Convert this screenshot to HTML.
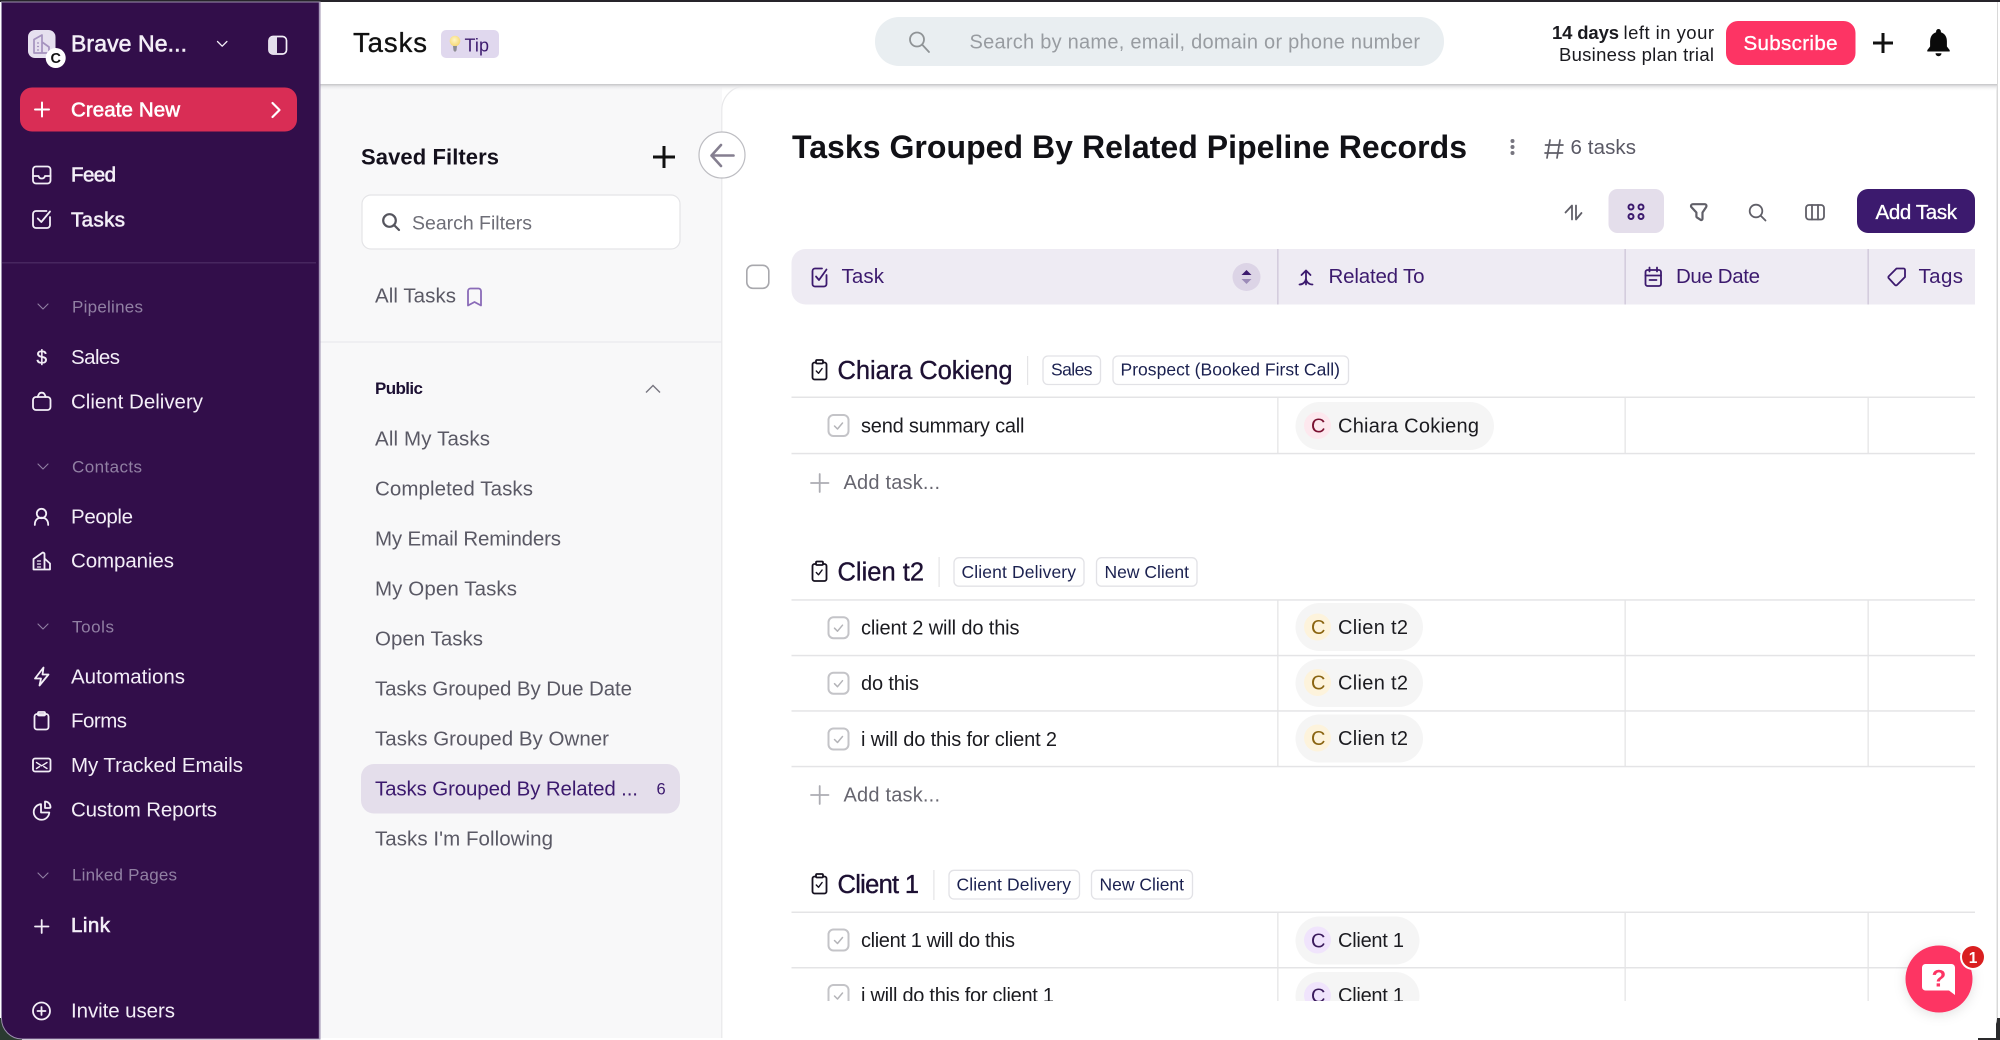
<!DOCTYPE html>
<html lang="en">
<head>
<meta charset="utf-8">
<title>Tasks</title>
<style>
html,body{margin:0;padding:0;width:2000px;height:1040px;overflow:hidden;background:#fff}
svg{display:block;filter:blur(.35px)}
text{font-family:"Liberation Sans",sans-serif;fill:currentColor;stroke:currentColor;stroke-width:0}
.m{stroke-width:.35}
.s{stroke-width:.6}
.i{fill:none;stroke:currentColor;stroke-width:1.8;stroke-linecap:round;stroke-linejoin:round}
</style>
</head>
<body>
<svg width="2000" height="1040" viewBox="0 0 2000 1040" xmlns="http://www.w3.org/2000/svg">
<defs>
<linearGradient id="sh" x1="0" y1="0" x2="0" y2="1"><stop offset="0" stop-color="#c4c4c6"/><stop offset=".35" stop-color="#e6e6e8"/><stop offset="1" stop-color="#f8f8f9" stop-opacity="0"/></linearGradient>
<radialGradient id="bulb" cx=".45" cy=".4" r=".6"><stop offset="0" stop-color="#fff6c8"/><stop offset="1" stop-color="#f6d873"/></radialGradient>
<clipPath id="rows"><rect x="780" y="910" width="1200" height="91"/></clipPath>
<filter id="hs" x="-30%" y="-30%" width="160%" height="160%"><feDropShadow dx="0" dy="2" stdDeviation="6" flood-color="#000" flood-opacity=".12"/></filter>
<g id="cb">
<rect x="828.500" y="-10.500" width="20" height="21" rx="5" fill="#fff" stroke="#c4c4c8" stroke-width="2"/>
<path d="M834.500 .5l3 3 5-6" fill="none" stroke="#b4b4b8" stroke-width="1.500" stroke-linecap="round" stroke-linejoin="round"/>
</g>
<g id="clip" fill="none" stroke="#15101f" stroke-width="1.800" stroke-linejoin="round" stroke-linecap="round">
<rect x="812.500" y="-8" width="14" height="17" rx="2"/>
<rect x="816" y="-10.500" width="7" height="3.500" rx="1" fill="#fff"/>
<path d="M816.300 .5l2.200 2.300 3.600-4.800" stroke-width="1.400"/>
</g>
</defs>

<!-- window base -->
<rect width="2000" height="1040" fill="#fff"/>
<rect x="0" y="0" width="2000" height="2" fill="#26242a"/>
<!-- corners -->
<rect x="0" y="1018" width="22" height="22" fill="#2a3a30"/>
<rect x="1978" y="1018" width="22" height="22" fill="#2a2a2c"/>

<!-- main surface -->
<path d="M320 2H1997V1018a20 20 0 0 1-20 20H320z" fill="#fff"/>
<rect x="1996.500" y="2" width="1.500" height="1016" fill="#d8d8d8"/>
<!-- panel -->
<rect x="320" y="84" width="402" height="954" fill="#f8f8f9"/>
<rect x="320" y="341" width="402" height="2" fill="#efeff2"/>
<path d="M722 1038V110a24 24 0 0 1 24-24H1996V1038z" fill="#fff"/>
<path d="M721.800 1038V110a24 24 0 0 1 24-24" fill="none" stroke="#e8e8ea" stroke-width="1.200"/>
<rect x="320" y="84" width="1677" height="7" fill="url(#sh)"/>
<rect x="320" y="2" width="1677" height="82" fill="#fff"/>

<!-- sidebar -->
<path d="M1.500 2H320V1039H22a20.500 20.500 0 0 1-20.500-20.500z" fill="#320e4a" stroke="#9c8fae" stroke-width="1"/>
<rect x="318.800" y="2" width="1.200" height="1037" fill="#a99cbc"/>
<rect x="2" y="262" width="314" height="1.500" fill="#47265f"/>

<rect x="28" y="30" width="27.500" height="28" rx="7" fill="#e6e0ef"/>
<g fill="none" stroke="#a593bf" stroke-width="1.700" stroke-linejoin="round"><path d="M34 53V39.500l8-4.500V53zM42 42l7 5v6h-7"/><path d="M37 43h2M37 46.500h2M37 50h2" stroke-width="1.300"/></g>
<circle cx="55.700" cy="58" r="10" fill="#fff"/>
<text x="50.500" y="63" font-size="14.500" font-weight="bold" style="color:#111" textLength="10.500">C</text>
<g style="color:#f3eef7">
<text class="s" x="71" y="51.500" font-size="23" textLength="116">Brave Ne...</text>
<path class="i" style="stroke-width:1.300" d="M217.500 41.500l4.700 4.700 4.700-4.700"/>
<rect x="269" y="36.500" width="17.500" height="17.500" rx="4" fill="none" stroke="#f3eef7" stroke-width="1.700"/>
<path d="M277 36.500h-4a4 4 0 0 0-4 4v9.500a4 4 0 0 0 4 4h4z" fill="#e4deec"/>
</g>

<rect x="20" y="87.500" width="277" height="44" rx="12" fill="#d92d55"/>
<g style="color:#fff">
<path class="i" style="stroke-width:2" d="M35 109.500h14M42 102.500v14"/>
<text class="s" x="71" y="116.500" font-size="20.500" textLength="109">Create New</text>
<path class="i" style="stroke-width:2.200" d="M272.500 103l7 7-7 7"/>
</g>

<g style="color:#f3eef7;font-size:20.500px">
<g class="i">
<rect x="33" y="166.500" width="17.500" height="17" rx="3"/>
<path d="M33 176h5.500c.5 2 1.500 2.500 3.200 2.500s2.800-.5 3.300-2.500h5.500"/>
<path d="M50 217v8a3 3 0 0 1-3 3H36a3 3 0 0 1-3-3V214a3 3 0 0 1 3-3h10.500"/>
<path d="M37.800 218.500l3.500 3.500 8.700-10.500"/>
<rect x="33" y="397" width="17.500" height="13" rx="3"/>
<path d="M37.500 397l1.500-3a3 3 0 0 1 2.700-1.300 3 3 0 0 1 2.700 1.300l1.500 3"/>
<circle cx="41.500" cy="513.500" r="4.700"/>
<path d="M34.800 525c0-5.200 2.800-7.300 6.700-7.300s6.700 2.100 6.700 7.300"/>
<path d="M33.500 569.500V559l8.500-6a1.500 1.500 0 0 1 2.500 1.200V569.500M44.500 558.500L50 563.500V569.500H33.500"/>
<path d="M37.500 561h3M37.500 564h3M37.500 567h3" style="stroke-width:1.300"/>
<path d="M43.500 667.500L35 678.500h6l-1.500 7 9-11h-6z"/>
<rect x="34.500" y="714" width="14" height="15.500" rx="2.500"/>
<rect x="38" y="712" width="7" height="3.500" rx="1"/>
<rect x="33" y="758.500" width="17.500" height="13" rx="2"/>
<path d="M36.500 762.500l5.200 3.300 5.300-3.300M36.500 768.500l3.200-2M47 768.500l-3.200-2" style="stroke-width:1.400"/>
<path d="M41 804.200a7.800 7.800 0 1 0 8.300 8.300h-8.300z"/>
<path d="M45 801.500a5.500 5.500 0 0 1 5.500 5.500 1 1 0 0 1-1 1H45z"/>
<path d="M35 926.500h13.500M41.700 920v13"/>
<circle cx="41.500" cy="1011" r="8.500"/>
<path d="M37.500 1011h8M41.500 1007v8"/>
</g>
<text class="s" x="71" y="181.500" textLength="45">Feed</text>
<text class="s" x="71" y="226.300" textLength="54">Tasks</text>
<text class="m" x="36.500" y="364" style="font-size:19px" textLength="11">$</text>
<text x="71" y="364" textLength="49">Sales</text>
<text x="71" y="408.300" textLength="132">Client Delivery</text>
<text x="71" y="523.300" textLength="62">People</text>
<text x="71" y="567.700" textLength="103">Companies</text>
<text x="71" y="683.300" textLength="114">Automations</text>
<text x="71" y="727.700" textLength="56">Forms</text>
<text x="71" y="772" textLength="172">My Tracked Emails</text>
<text x="71" y="816.700" textLength="146">Custom Reports</text>
<text class="s" x="71" y="932" textLength="39">Link</text>
<text x="71" y="1017.700" textLength="104">Invite users</text>
</g>
<g style="color:#9180a3;font-size:17px">
<g class="i" style="stroke-width:1.100">
<path d="M38 304l5 5 5-5M38 464l5 5 5-5M38 624l5 5 5-5M38 873l5 5 5-5"/>
</g>
<text x="72" y="312.700" textLength="71">Pipelines</text>
<text x="72" y="472.300" textLength="70">Contacts</text>
<text x="72" y="632.300" textLength="42">Tools</text>
<text x="72" y="880.300" textLength="105">Linked Pages</text>
</g>

<!-- header -->
<text class="m" x="353" y="52" font-size="27.500" style="color:#111" textLength="74">Tasks</text>
<rect x="441" y="30" width="58" height="28" rx="5" fill="#e0d8ee"/>
<circle cx="455" cy="41" r="5.300" fill="url(#bulb)"/>
<path d="M453 46h4l-.5 4.500-1.500 1.500-1.500-1.500z" fill="#8d8d92"/>
<text x="464.500" y="51.500" font-size="18" style="color:#3c1a6e" textLength="24.500">Tip</text>

<rect x="875" y="17" width="569" height="49" rx="24" fill="#e9eef1"/>
<g class="i" style="color:#8f9396"><circle cx="917" cy="39.500" r="7"/><path d="M922.500 45l6.500 7"/></g>
<text x="969.500" y="48.500" font-size="20" style="color:#989ca1" textLength="450.500">Search by name, email, domain or phone number</text>

<g font-size="18.500" style="color:#1a1a1f">
<text x="1552" y="39" font-weight="bold" textLength="67">14 days</text>
<text x="1623.500" y="39" textLength="90.500">left in your</text>
<text x="1559" y="61" textLength="155">Business plan trial</text>
</g>
<rect x="1726" y="21" width="129.500" height="44" rx="12" fill="#fd3464"/>
<text class="m" x="1743.500" y="50" font-size="20.500" style="color:#fff" textLength="94">Subscribe</text>
<path d="M1873 43h20M1883 33v20" stroke="#111" stroke-width="3" fill="none"/>
<path d="M1938.500 29a2.400 2.400 0 0 1 2.400 2.400v.9c4 1.300 6 4.700 6 9.200v5l2.800 3.600v1.400H1927.300v-1.400l2.800-3.600v-5c0-4.500 2-7.900 6-9.200v-.9a2.400 2.400 0 0 1 2.400-2.400z" fill="#0a0a0a"/>
<path d="M1935.500 53.200h6a3 3 0 0 1-6 0z" fill="#0a0a0a"/>

<!-- saved filters panel -->
<text font-weight="bold" x="361" y="164.300" font-size="22" style="color:#14101c" textLength="138">Saved Filters</text>
<path d="M653 157h22M664 146v22" stroke="#111" stroke-width="3" fill="none"/>
<circle cx="722" cy="155" r="23" fill="#fff" stroke="#bdbdc2" stroke-width="1.200"/>
<g class="i" style="color:#857f90;stroke-width:2.600"><path d="M711.500 155.500h22M721 145l-9.500 10.500 9.500 10.500"/></g>
<rect x="362" y="195" width="318" height="54" rx="9" fill="#fff" stroke="#e4e4e7" stroke-width="1.200"/>
<g class="i" style="color:#55555e;stroke-width:2.200"><circle cx="389.500" cy="220.500" r="6.300"/><path d="M394.500 225.500l4.500 4.500"/></g>
<text x="412" y="229.300" font-size="19.500" style="color:#6e6e77" textLength="120">Search Filters</text>
<text x="375" y="302.700" font-size="20.500" style="color:#5a5965" textLength="81">All Tasks</text>
<path d="M468 291a2.500 2.500 0 0 1 2.500-2.500h8a2.500 2.500 0 0 1 2.500 2.500v14.500l-6.500-3.500-6.500 3.500z" fill="none" stroke="#8a6bb8" stroke-width="1.800" stroke-linejoin="round"/>

<text font-weight="bold" x="375" y="394" font-size="17" style="color:#1c1033" textLength="48">Public</text>
<path d="M646 392.500l7-7 7 7" fill="none" stroke="#77757f" stroke-width="1.400"/>
<g font-size="20.500" style="color:#5a5965">
<text x="375" y="445.700" textLength="115">All My Tasks</text>
<text x="375" y="495.700" textLength="158">Completed Tasks</text>
<text x="375" y="545.700" textLength="186">My Email Reminders</text>
<text x="375" y="595.700" textLength="142">My Open Tasks</text>
<text x="375" y="645.700" textLength="108">Open Tasks</text>
<text x="375" y="695.700" textLength="257">Tasks Grouped By Due Date</text>
<text x="375" y="745.700" textLength="234">Tasks Grouped By Owner</text>
<text x="375" y="845.500" textLength="178">Tasks I'm Following</text>
</g>
<rect x="361" y="764" width="319" height="49.500" rx="13" fill="#e4deeb"/>
<text x="375" y="795.700" font-size="20.500" style="color:#3c1a6e" textLength="263">Tasks Grouped By Related ...</text>
<text x="656.500" y="794.700" font-size="16.500" style="color:#3c1a6e" textLength="9.500">6</text>

<!-- title -->
<text font-weight="bold" x="792" y="158" font-size="32" style="color:#111116" textLength="675">Tasks Grouped By Related Pipeline Records</text>
<g fill="#77757f"><circle cx="1512.500" cy="141" r="2"/><circle cx="1512.500" cy="147" r="2"/><circle cx="1512.500" cy="153" r="2"/></g>
<g class="i" style="color:#5f5e68;stroke-width:1.700"><path d="M1550 140l-3 18M1560 140l-3 18M1545.500 145h17.500M1545 153h17.500"/></g>
<text x="1570.500" y="154" font-size="20.500" style="color:#5a5965" textLength="65.500">6 tasks</text>

<!-- toolbar -->
<g class="i" style="color:#605f68;stroke-width:1.800">
<path d="M1572 219.500V205.500l-6.500 7M1576 205.500v14l5.500-6.500"/>
<path style="stroke-width:2.200" d="M1691 206a1.800 1.800 0 0 1 1.800-1.800h11.900a1.800 1.800 0 0 1 1.500 2.800l-3.700 5.500v6.300a1.200 1.200 0 0 1-1.900 1l-3.700-2.400a1 1 0 0 1-.5-.9V212.500l-5.100-5.500a1.800 1.800 0 0 1-.3-1z"/>
<circle cx="1756" cy="211" r="6.300"/><path d="M1761 216l4.500 4.500"/>
<rect x="1806" y="205" width="18" height="14.500" rx="3"/><path d="M1812 205v14.500M1818 205v14.500"/>
</g>
<rect x="1608.500" y="189" width="55.500" height="44" rx="9" fill="#e4deeb"/>
<g fill="none" stroke="#3c1a6e" stroke-width="2"><circle cx="1631" cy="207" r="2.500"/><circle cx="1641" cy="207" r="2.500"/><circle cx="1631" cy="216.500" r="2.500"/><circle cx="1641" cy="216.500" r="2.500"/></g>
<rect x="1857" y="189" width="118" height="44" rx="11" fill="#3c1a6e"/>
<text class="m" x="1875.500" y="219" font-size="20.500" style="color:#fff" textLength="81.500">Add Task</text>

<!-- table header -->
<rect x="746.800" y="265.300" width="22" height="23" rx="6" fill="#fff" stroke="#a8a8ad" stroke-width="1.600"/>
<path d="M805.500 249H1975v55.500H805.500a14 14 0 0 1-14-14V263a14 14 0 0 1 14-14z" fill="#eeebf3"/>
<rect x="1277.200" y="249" width="1.300" height="55.500" fill="#cdc6d8"/>
<rect x="1624.500" y="249" width="1.300" height="55.500" fill="#cdc6d8"/>
<rect x="1867.500" y="249" width="1.300" height="55.500" fill="#cdc6d8"/>
<g class="i" style="color:#3c1a6e">
<path d="M827 275v9a2.500 2.500 0 0 1-2.500 2.500h-9a2.500 2.500 0 0 1-2.500-2.500v-13a2.500 2.500 0 0 1 2.500-2.500h7" transform="translate(-.5 0)"/>
<path d="M816 276.500l3 3.500 7.500-10.500"/>
<path d="M1306 284.500v-13M1301.500 275l4.500-4.500 4.500 4.500M1299.500 284.500a6.500 6.500 0 0 0 6.500-6 6.500 6 0 0 0 6.500 6"/>
<rect x="1645.500" y="270" width="15.500" height="16" rx="2"/>
<path d="M1645.500 275.500h15.500M1649.500 267.500v4M1657 267.500v4M1649.500 280h7" />
<path d="M1889 276l7.500-7.500h7a1.500 1.500 0 0 1 1.500 1.500v7l-8 8a1.500 1.500 0 0 1-2 0l-6-6.500a1.500 1.500 0 0 1 0-2.500z"/>
</g>
<circle cx="1246.500" cy="277" r="14" fill="#dcd4e6"/>
<path d="M1241.500 275l5-5 5 5z" fill="#3c1a6e"/>
<path d="M1241.500 279l5 5 5-5z" fill="#9c8bb8"/>
<g font-size="20.500" style="color:#3c1a6e">
<text x="841.500" y="283" textLength="42.500">Task</text>
<text x="1328.500" y="283" textLength="96">Related To</text>
<text x="1676" y="283" textLength="84">Due Date</text>
<text x="1918.500" y="283" textLength="44.500">Tags</text>
</g>

<!-- table lines -->
<g fill="#e4e4e6">
<rect x="791.500" y="396.500" width="1183.500" height="1.500"/>
<rect x="791.500" y="452.800" width="1183.500" height="1.500"/>
<rect x="791.500" y="599.200" width="1183.500" height="1.500"/>
<rect x="791.500" y="654.800" width="1183.500" height="1.500"/>
<rect x="791.500" y="710.200" width="1183.500" height="1.500"/>
<rect x="791.500" y="765.800" width="1183.500" height="1.500"/>
<rect x="791.500" y="911.500" width="1183.500" height="1.500"/>
<rect x="791.500" y="967" width="1183.500" height="1.500"/>
<rect x="1277.200" y="397" width="1.300" height="56"/>
<rect x="1624.500" y="397" width="1.300" height="56"/>
<rect x="1867.500" y="397" width="1.300" height="56"/>
<rect x="1277.200" y="600" width="1.300" height="167"/>
<rect x="1624.500" y="600" width="1.300" height="167"/>
<rect x="1867.500" y="600" width="1.300" height="167"/>
<rect x="1277.200" y="912" width="1.300" height="89"/>
<rect x="1624.500" y="912" width="1.300" height="89"/>
<rect x="1867.500" y="912" width="1.300" height="89"/>
<rect x="1027" y="356" width="1.200" height="29"/>
<rect x="938.500" y="557" width="1.200" height="30"/>
<rect x="933.300" y="870" width="1.200" height="30"/>
</g>

<!-- group 1 -->
<use href="#clip" y="370.500"/>
<text class="m" x="837.500" y="379" font-size="25.500" style="color:#1d1033" textLength="175">Chiara Cokieng</text>
<g fill="#fff" stroke="#e2e2e6" stroke-width="1.300">
<rect x="1043" y="356" width="57.500" height="28.500" rx="5"/>
<rect x="1113" y="356" width="235.500" height="28.500" rx="5"/>
<rect x="954" y="557.700" width="130" height="28.500" rx="5"/>
<rect x="1096.500" y="557.700" width="100.500" height="28.500" rx="5"/>
<rect x="949" y="870.300" width="130.500" height="28.700" rx="5"/>
<rect x="1091.500" y="870.300" width="101" height="28.700" rx="5"/>
</g>
<g font-size="17.500" style="color:#1b2150">
<text x="1051" y="375.700" textLength="41.500">Sales</text>
<text x="1120.500" y="375.700" textLength="219.500">Prospect (Booked First Call)</text>
<text x="961.500" y="578" textLength="114.500">Client Delivery</text>
<text x="1104.500" y="578" textLength="84.500">New Client</text>
<text x="956.500" y="890.500" textLength="114.500">Client Delivery</text>
<text x="1099.500" y="890.500" textLength="84.500">New Client</text>
</g>

<use href="#cb" y="425.500"/>
<g font-size="20" style="color:#1b1b20">
<text x="861" y="432.700" textLength="163.500">send summary call</text>
<text x="861" y="634.700" textLength="158.500">client 2 will do this</text>
<text x="861" y="690" textLength="58">do this</text>
<text x="861" y="746" textLength="196">i will do this for client 2</text>
<text x="861" y="947" textLength="154">client 1 will do this</text>
</g>
<use href="#cb" y="627.700"/><use href="#cb" y="683.200"/><use href="#cb" y="739"/><use href="#cb" y="940"/>

<!-- add task -->
<g class="i" style="color:#acacb2;stroke-width:1.800"><path d="M811 483h17.500M819.700 474v18M811 795h17.500M819.700 786v18"/></g>
<g font-size="20" style="color:#66656f">
<text x="843.500" y="489" textLength="96.500">Add task...</text>
<text x="843.500" y="801.700" textLength="96.500">Add task...</text>
</g>

<!-- group 2 / 3 headings -->
<use href="#clip" y="572"/>
<text class="m" x="837.500" y="580.500" font-size="25.500" style="color:#1d1033" textLength="86.500">Clien t2</text>
<use href="#clip" y="884.500"/>
<text class="m" x="837.500" y="893" font-size="25.500" style="color:#1d1033" textLength="81.500">Client 1</text>

<!-- pills -->
<g fill="#f5f5f5">
<rect x="1295.500" y="402" width="198.500" height="48" rx="24"/>
<rect x="1295.500" y="603" width="127.500" height="48" rx="24"/>
<rect x="1295.500" y="659" width="127.500" height="48" rx="24"/>
<rect x="1295.500" y="714.500" width="127.500" height="48" rx="24"/>
<rect x="1295.500" y="916.500" width="124" height="48" rx="24"/>
</g>
<circle cx="1317.500" cy="425.500" r="13.500" fill="#fde8ee"/>
<circle cx="1317.500" cy="627" r="13.500" fill="#fdf3dc"/>
<circle cx="1317.500" cy="682.500" r="13.500" fill="#fdf3dc"/>
<circle cx="1317.500" cy="738" r="13.500" fill="#fdf3dc"/>
<circle cx="1317.500" cy="940" r="13.500" fill="#f0e4fc"/>
<g font-size="20">
<text x="1311" y="432.500" style="color:#7a1030" textLength="14">C</text>
<text x="1311" y="634" style="color:#8a6410" textLength="14">C</text>
<text x="1311" y="689.500" style="color:#8a6410" textLength="14">C</text>
<text x="1311" y="745" style="color:#8a6410" textLength="14">C</text>
<text x="1311" y="947.500" style="color:#3a1a5c" textLength="14">C</text>
</g>
<g font-size="20" style="color:#1b1b20">
<text x="1338" y="432.300" textLength="141">Chiara Cokieng</text>
<text x="1338" y="634" textLength="70">Clien t2</text>
<text x="1338" y="689.700" textLength="70">Clien t2</text>
<text x="1338" y="745" textLength="70">Clien t2</text>
<text x="1338" y="947" textLength="66">Client 1</text>
</g>

<!-- clipped last row -->
<g clip-path="url(#rows)">
<use href="#cb" y="995.500"/>
<text x="861" y="1002" font-size="20" style="color:#1b1b20" textLength="193">i will do this for client 1</text>
<rect x="1295.500" y="972" width="124" height="48" rx="24" fill="#f5f5f5"/>
<circle cx="1317.500" cy="995.500" r="13.500" fill="#f0e4fc"/>
<text x="1311" y="1002.500" font-size="20" style="color:#3a1a5c" textLength="14">C</text>
<text x="1338" y="1002" font-size="20" style="color:#1b1b20" textLength="66">Client 1</text>
</g>

<!-- help widget -->
<circle cx="1939" cy="979" r="33.500" fill="#fd3464" filter="url(#hs)"/>
<path d="M1925.500 964h26a3.500 3.500 0 0 1 3.500 3.500V995l-6-4.500h-23.500a3.500 3.500 0 0 1-3.500-3.500v-19.500a3.500 3.500 0 0 1 3.500-3.500z" fill="#fff"/>
<text x="1931.500" y="986.500" font-size="24" font-weight="bold" style="color:#fd3464" textLength="14">?</text>
<circle cx="1973" cy="957" r="13" fill="#fff"/>
<circle cx="1973" cy="957" r="11" fill="#d91f20"/>
<text x="1968.800" y="962.800" font-size="15.500" font-weight="bold" style="color:#fff" textLength="8.500">1</text>
</svg>
</body>
</html>
